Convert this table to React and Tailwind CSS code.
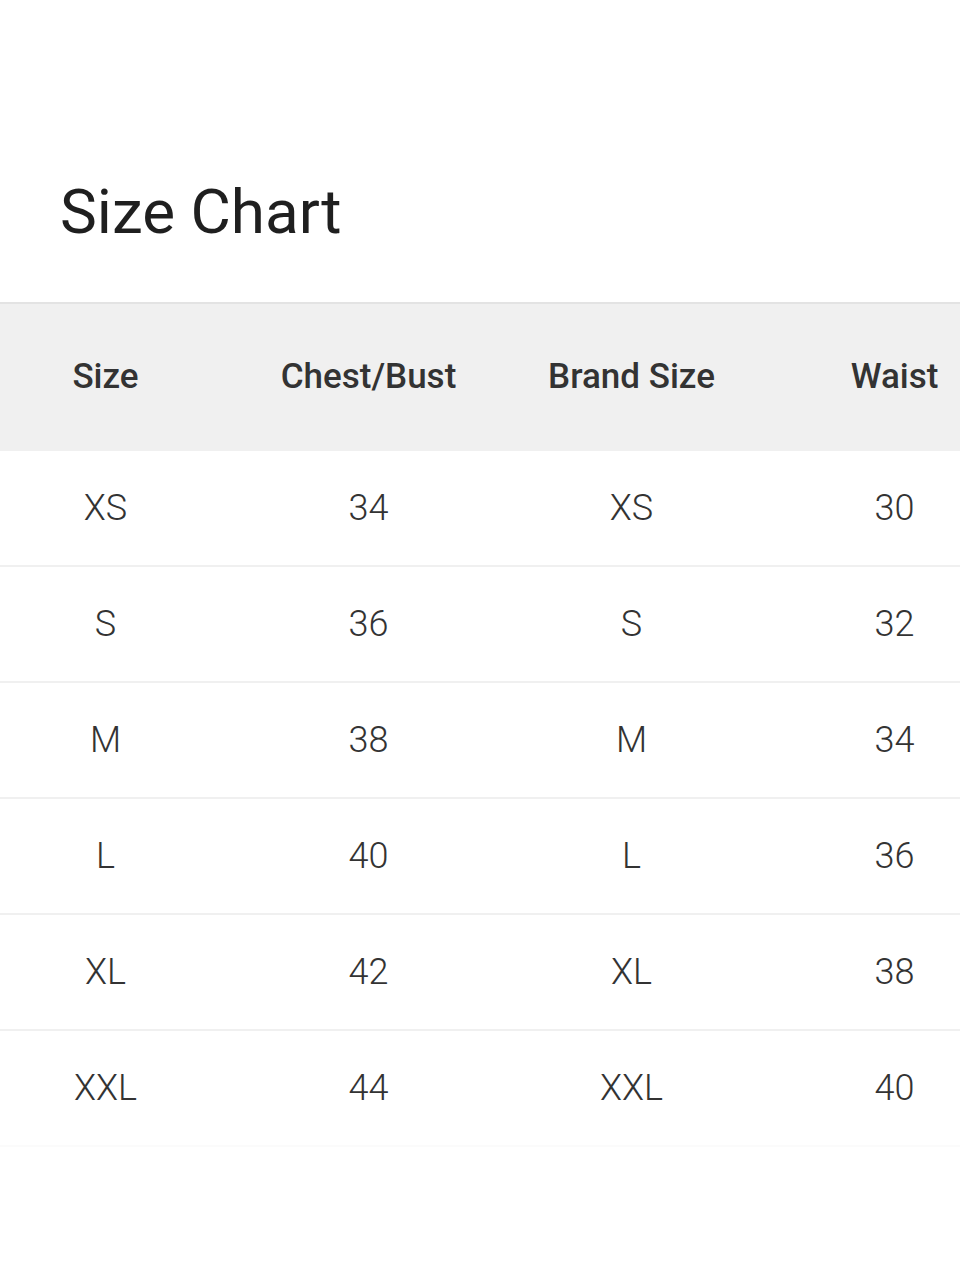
const columns = ['Size', 'Chest/Bust', 'Brand Size', 'Waist']

const rows = [
  ['XS', '34', 'XS', '30'],
  ['S', '36', 'S', '32'],
  ['M', '38', 'M', '34'],
  ['L', '40', 'L', '36'],
  ['XL', '42', 'XL', '38'],
  ['XXL', '44', 'XXL', '40'],
]

export default function App() {
  return (
    <div className="w-[960px] h-[1280px] bg-white overflow-hidden font-['Roboto',sans-serif]">
      <h1 className="pt-[176px] pl-[60px] text-[62px] leading-[72px] text-[#1f1f1f] font-normal">Size Chart</h1>

      <div className="mt-[54px] w-[1052px] -ml-[26px]">
        <div className="grid grid-cols-4 h-[149px] items-center bg-[#f0f0f0] border-t-2 border-[#e3e3e3]">
          {columns.map(c => (
            <div key={c} className="text-center text-[35px] font-medium text-[#333]">{c}</div>
          ))}
        </div>
        {rows.map((r, i) => (
          <div
            key={i}
            className={`grid grid-cols-4 h-[116px] items-center border-b-2 ${i === rows.length - 1 ? 'border-[#fbfbfb]' : 'border-[#f0f0f0]'}`}
          >
            {r.map((v, j) => (
              <div key={j} className="text-center text-[36px] font-light text-[#333]">{v}</div>
            ))}
          </div>
        ))}
      </div>
    </div>
  )
}
